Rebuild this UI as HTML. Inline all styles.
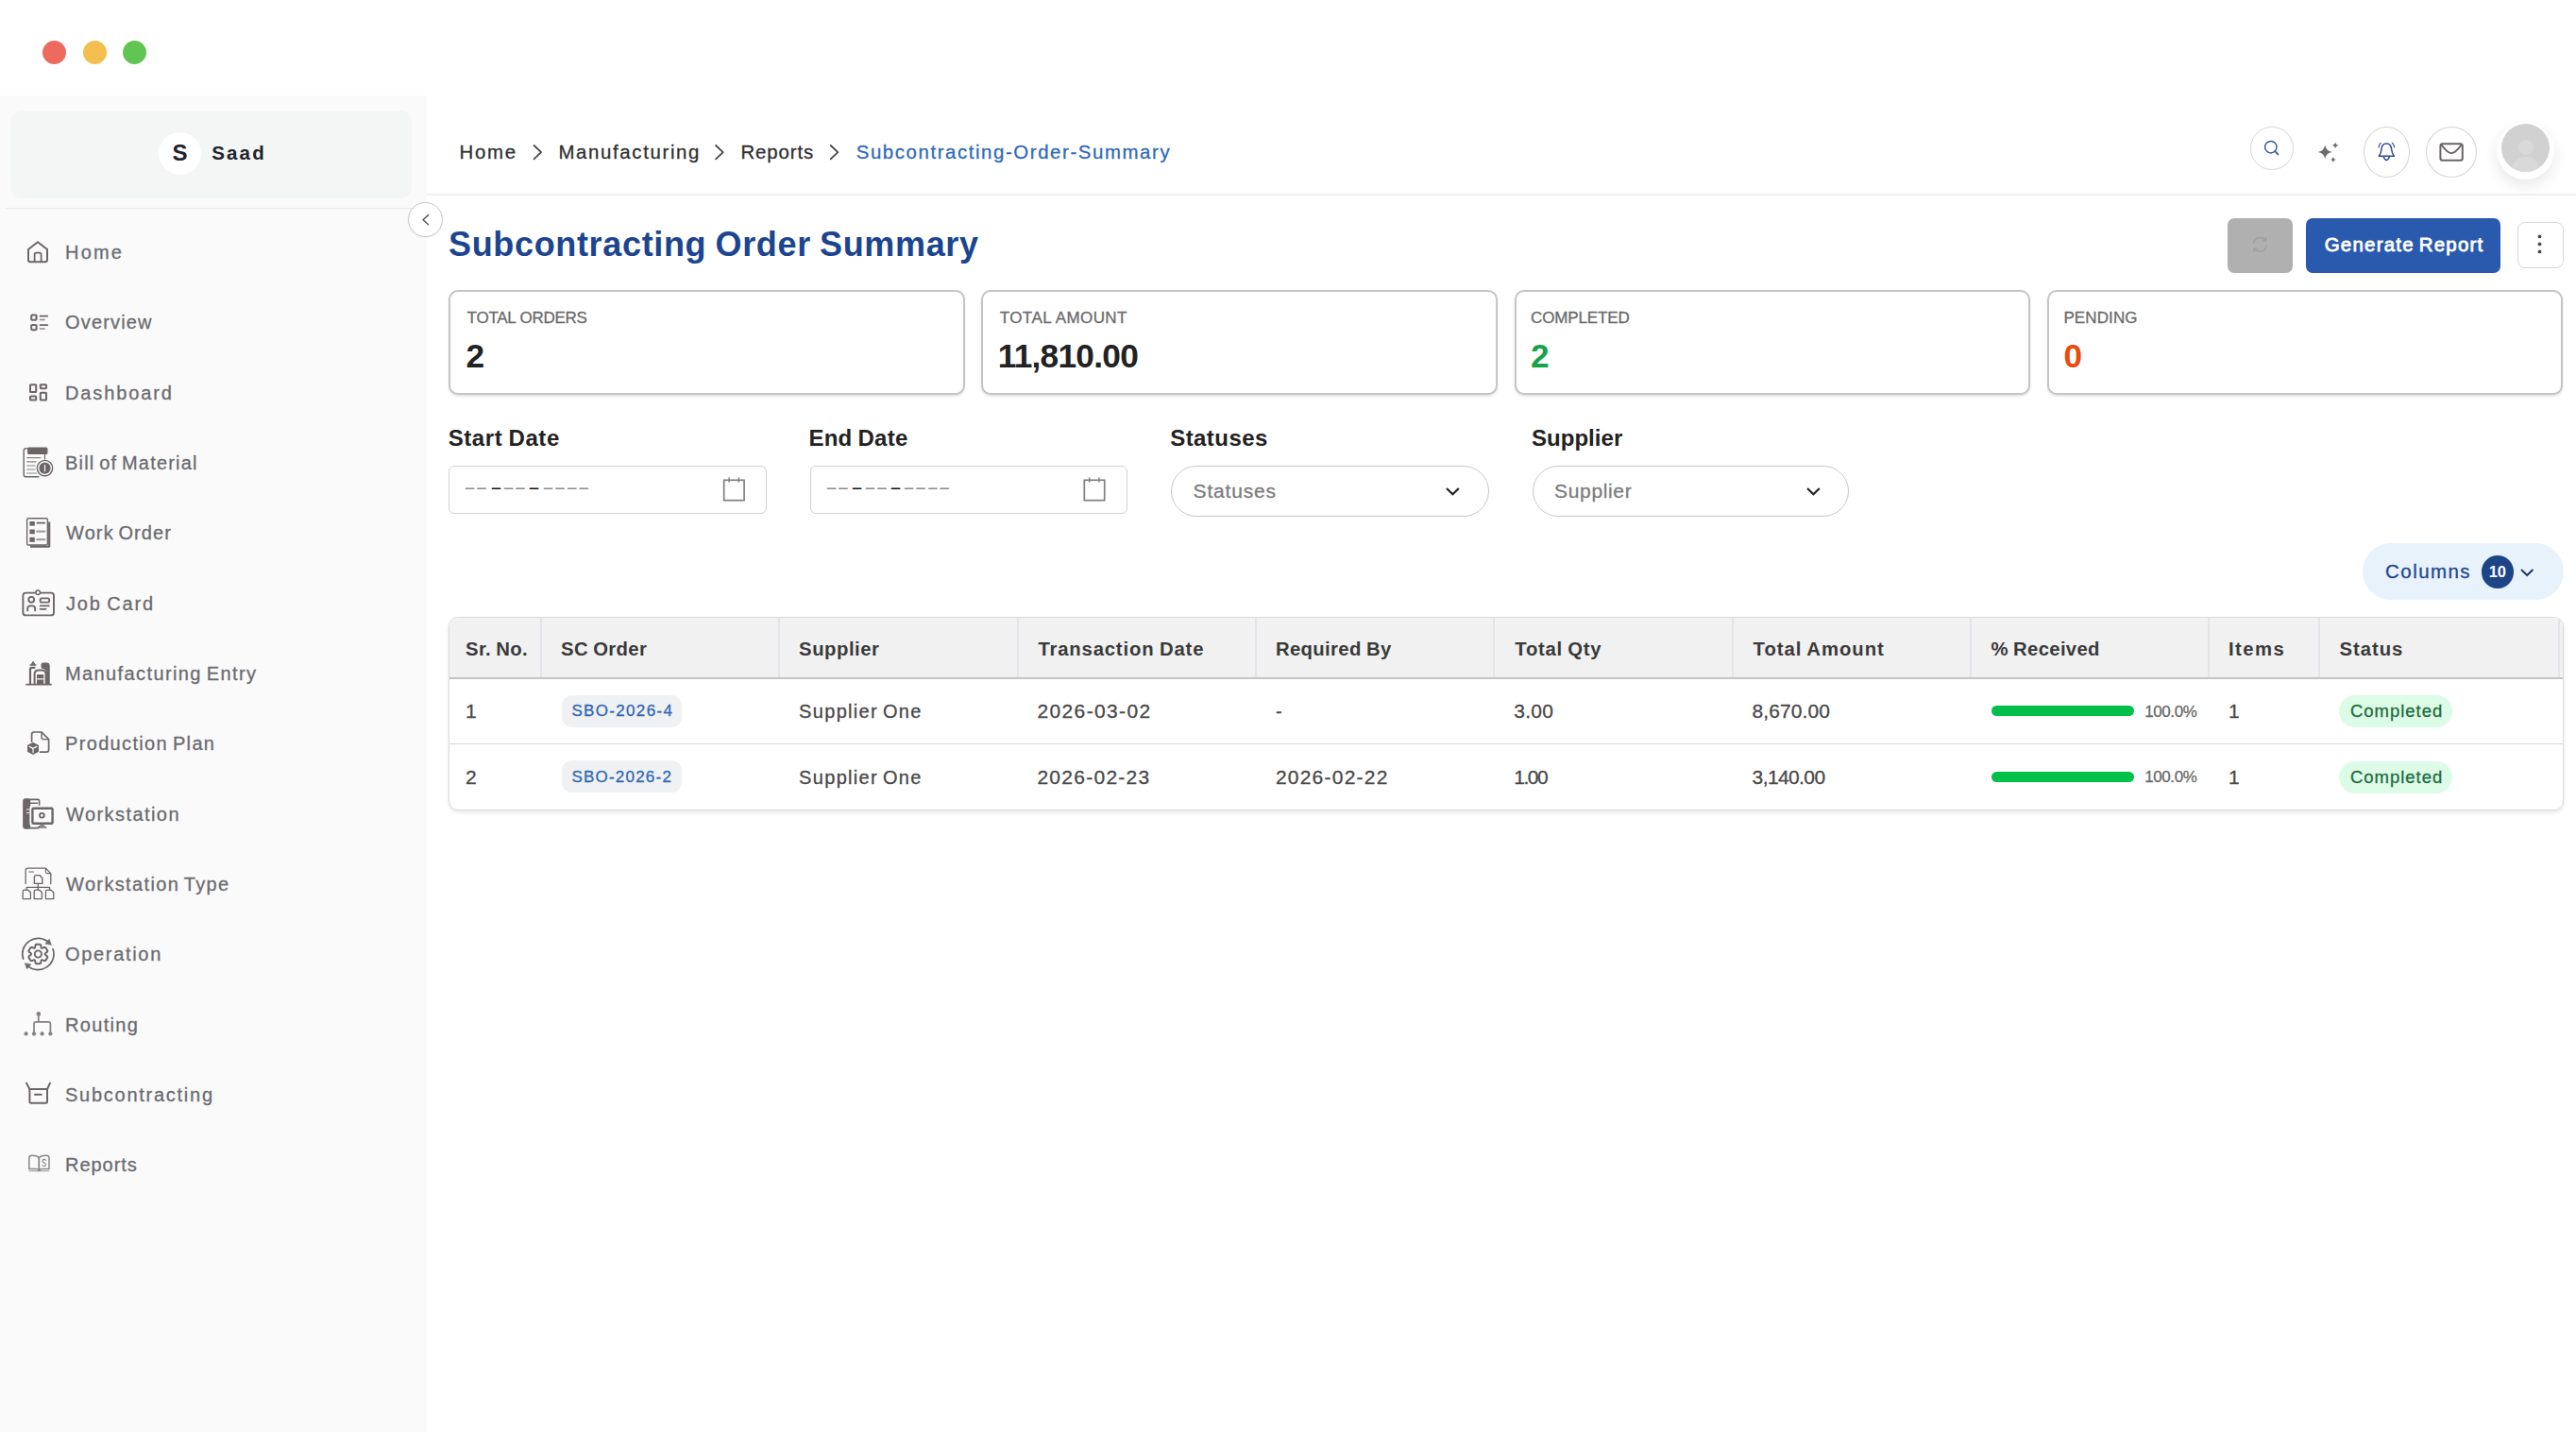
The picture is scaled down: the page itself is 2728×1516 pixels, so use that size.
<!DOCTYPE html>
<html lang="en"><head><meta charset="utf-8"><title>Subcontracting Order Summary</title>
<style>
html,body{margin:0;padding:0;background:#fff;}
body{width:2728px;height:1516px;position:relative;overflow:hidden;font-family:'Liberation Sans', sans-serif;}
.t{position:absolute;white-space:pre;line-height:1;}
.b{position:absolute;box-sizing:border-box;}
svg{position:absolute;overflow:visible;}
</style></head><body>
<!-- traffic lights -->
<div class="b" style="left:44.5px;top:42.5px;width:25px;height:25px;border-radius:50%;background:#ec6a5e"></div>
<div class="b" style="left:87.5px;top:42.5px;width:25px;height:25px;border-radius:50%;background:#f4bf4f"></div>
<div class="b" style="left:129.5px;top:42.5px;width:25px;height:25px;border-radius:50%;background:#61c554"></div>
<!-- sidebar -->
<div class="b" style="left:0;top:101px;width:452px;height:1415px;background:#fafafa"></div>
<div class="b" style="left:10.5px;top:117px;width:425.5px;height:92.5px;border-radius:12px;background:#f4f5f5"></div>
<div class="b" style="left:168.3px;top:140px;width:45px;height:45px;border-radius:50%;background:#fff"></div>
<div class="b" style="left:6px;top:220px;width:440px;height:1px;background:#ececec"></div>
<!-- header border -->
<div class="b" style="left:452px;top:205px;width:2276px;height:2px;background:#f0f0f0"></div>
<!-- collapse btn -->
<div class="b" style="left:431.8px;top:213.9px;width:37.4px;height:37.4px;border-radius:50%;background:#fff;border:1.7px solid #c6c6c6;box-shadow:0 1px 2px rgba(0,0,0,.06)"></div>
<!-- header icon circles -->
<div class="b" style="left:2383px;top:134px;width:45.6px;height:45.6px;border-radius:50%;border:1.6px solid #d3d3d6"></div>
<div class="b" style="left:2503.1px;top:134px;width:48.8px;height:53.8px;border-radius:50%;border:1.6px solid #d3d3d6"></div>
<div class="b" style="left:2569px;top:134px;width:54.2px;height:53.8px;border-radius:50%;border:1.6px solid #d3d3d6"></div>
<div class="b" style="left:2643.8px;top:129px;width:61.4px;height:61.4px;border-radius:50%;background:#fff;box-shadow:0 7px 16px rgba(0,0,0,.09)"></div>
<div class="b" style="left:2649px;top:131px;width:51px;height:51px;border-radius:50%;background:#d1d1d1;overflow:hidden">
  <div class="b" style="left:17.5px;top:17px;width:16px;height:16px;border-radius:50%;background:#d9d9d9"></div>
  <div class="b" style="left:11px;top:35px;width:29px;height:24px;border-radius:14px 14px 0 0;background:#d9d9d9"></div>
</div>
<!-- buttons -->
<div class="b" style="left:2358.5px;top:230.7px;width:69px;height:58.2px;border-radius:7px;background:#b0b0b0"></div>
<div class="b" style="left:2441.5px;top:230.7px;width:206px;height:58.2px;border-radius:7px;background:#2a5aae"></div>
<div class="b" style="left:2666.1px;top:235.1px;width:48.6px;height:48.9px;border-radius:8px;background:#fff;border:1.8px solid #d6d6d8"></div>
<!-- cards -->
<div class="b card" style="left:475px;top:307.2px;width:546.6px;height:111px"></div>
<div class="b card" style="left:1039.3px;top:307.2px;width:546.6px;height:111px"></div>
<div class="b card" style="left:1603.6px;top:307.2px;width:546.6px;height:111px"></div>
<div class="b card" style="left:2167.9px;top:307.2px;width:546.6px;height:111px"></div>
<style>.card{border:2px solid #c5c5c5;border-radius:10px;background:#fff;box-shadow:0 1.5px 2.5px rgba(0,0,0,.10)}</style>
<!-- inputs -->
<div class="b" style="left:475.3px;top:493px;width:336.5px;height:51px;border-radius:6px;border:1.7px solid #d2d2d2;background:#fff"></div>
<div class="b" style="left:858px;top:493px;width:335.6px;height:51px;border-radius:6px;border:1.7px solid #d2d2d2;background:#fff"></div>
<div class="b" style="left:1239.8px;top:492.5px;width:337.2px;height:54.6px;border-radius:27.3px;border:1.6px solid #c8c8c8;background:#fff"></div>
<div class="b" style="left:1622.6px;top:492.5px;width:335.8px;height:54.6px;border-radius:27.3px;border:1.6px solid #c8c8c8;background:#fff"></div>
<!-- columns pill -->
<div class="b" style="left:2501.7px;top:575.4px;width:213.2px;height:59.7px;border-radius:30px;background:#e8f2fb"></div>
<div class="b" style="left:2627.8px;top:588.4px;width:33.9px;height:34.2px;border-radius:50%;background:#1c4487"></div>
<!-- table -->
<div class="b" style="left:475.2px;top:652.5px;width:2239.5px;height:205.5px;border-radius:10px;background:#fff;border:1.3px solid #dcdcdc;box-shadow:0 2px 4px rgba(0,0,0,.10);overflow:hidden">
  <div class="b" style="left:0;top:0;width:100%;height:64px;background:#f1f1f1"></div>
  <div class="b" style="left:96.0px;top:0;width:2px;height:64px;background:#e4e5ea"></div>
  <div class="b" style="left:348.3px;top:0;width:2px;height:64px;background:#e4e5ea"></div>
  <div class="b" style="left:600.6px;top:0;width:2px;height:64px;background:#e4e5ea"></div>
  <div class="b" style="left:852.9px;top:0;width:2px;height:64px;background:#e4e5ea"></div>
  <div class="b" style="left:1105.2px;top:0;width:2px;height:64px;background:#e4e5ea"></div>
  <div class="b" style="left:1357.5px;top:0;width:2px;height:64px;background:#e4e5ea"></div>
  <div class="b" style="left:1609.8px;top:0;width:2px;height:64px;background:#e4e5ea"></div>
  <div class="b" style="left:1862.1px;top:0;width:2px;height:64px;background:#e4e5ea"></div>
  <div class="b" style="left:1979.2px;top:0;width:2px;height:64px;background:#e4e5ea"></div>
  <div class="b" style="left:2232.9px;top:0;width:2px;height:64px;background:#e4e5ea"></div>
  <div class="b" style="left:0;top:63.6px;width:100%;height:2px;background:#c2c3c6"></div>
  <div class="b" style="left:0;top:133.4px;width:100%;height:1.6px;background:#d9d9d9"></div>
</div>
<div class="b" style="left:595.3px;top:735.5px;width:126.5px;height:34px;border-radius:11px;background:#f0f1f3"></div>
<div class="b" style="left:2108.6px;top:746.8px;width:151.4px;height:11.6px;border-radius:6px;background:#00c04b"></div>
<div class="b" style="left:2477.2px;top:736.2px;width:120px;height:33.8px;border-radius:17px;background:#dcfce7"></div>
<div class="b" style="left:595.3px;top:805.3px;width:126.5px;height:34px;border-radius:11px;background:#f0f1f3"></div>
<div class="b" style="left:2108.6px;top:816.6px;width:151.4px;height:11.6px;border-radius:6px;background:#00c04b"></div>
<div class="b" style="left:2477.2px;top:806.0px;width:120px;height:33.8px;border-radius:17px;background:#dcfce7"></div>

<svg width="2728" height="1516" viewBox="0 0 2728 1516" style="left:0;top:0" fill="none" stroke-linecap="round" stroke-linejoin="round">
<!-- ===== sidebar icons ===== -->
<g stroke="#6c6667" stroke-width="2">
  <!-- home -->
  <path d="M30 264 L40 256.2 L50 264 V275 Q50 277.2 47.8 277.2 H32.2 Q30 277.2 30 275 Z"/>
  <path d="M36.6 277 V269.5 Q36.6 267.6 38.5 267.6 H41.7 Q43.6 267.6 43.6 269.5 V277" stroke-width="1.8"/>
  <!-- overview -->
  <rect x="33.2" y="333.6" width="5.4" height="5.2" rx="1"/>
  <rect x="33.2" y="344" width="5.4" height="5.2" rx="1"/>
  <path d="M42.4 334.7 H50.2 M42.4 344.2 H50.2" stroke-width="1.7"/>
  <path d="M42.4 338.4 H47.2 M42.4 347.9 H47.2" stroke-width="1.5" opacity=".75"/>
  <!-- dashboard -->
  <rect x="32" y="407.2" width="6.2" height="7.8" rx=".6"/>
  <rect x="32" y="419.6" width="6.2" height="4" rx=".6"/>
  <rect x="42.8" y="407.2" width="6.2" height="4" rx=".6"/>
  <rect x="42.8" y="415.8" width="6.2" height="7.8" rx=".6"/>
</g>
<!-- bill of material -->
<g stroke="#6c6667" stroke-width="1.4">
  <path d="M29.5 474.6 H27.5 Q25.2 474.6 25.2 477 V502.4 Q25.2 504.8 27.5 504.8 H41"/>
  <rect x="29.8" y="474.2" width="20" height="6.2" rx="1" fill="#6c6667"/>
  <path d="M28.6 484.6 H43 M28.6 488.8 H38 M28.6 493 H37 M28.6 497 H37 M28.6 501 H38.5" stroke-width="1.2" opacity=".8"/>
  <path d="M47.5 481 V486" stroke-width="1.2"/>
  <circle cx="47.5" cy="495.6" r="8.2" fill="#fafafa"/>
  <circle cx="47.5" cy="495.6" r="5.4" fill="#6c6667"/>
  <path d="M47.5 492.4 V498.8" stroke="#fafafa" stroke-width="1.2"/>
</g>
<!-- work order -->
<g stroke="#6c6667" stroke-width="1.4">
  <path d="M52.2 552.5 V578.6 H32" stroke-width="2.2" stroke-linecap="butt"/>
  <rect x="28.6" y="548.8" width="21.8" height="28.2" rx="1.6" fill="#fafafa"/>
  <rect x="31.4" y="552" width="5.4" height="4.6" fill="#6c6667" stroke="none"/>
  <rect x="31.4" y="560.5" width="5.4" height="4.8" fill="#6c6667" stroke="none"/>
  <rect x="31.4" y="568.8" width="5.4" height="5" fill="#6c6667" stroke="none"/>
  <path d="M39.2 553.6 H47.4" stroke-width="1.6"/>
  <path d="M39.2 562.6 H47.4 M39.2 571.2 H47.4" stroke-width="2.2" opacity=".6"/>
</g>
<!-- job card -->
<g stroke="#6c6667" stroke-width="1.9">
  <rect x="24.4" y="627.6" width="32.6" height="23.8" rx="3"/>
  <circle cx="40.2" cy="627.2" r="2.3" fill="#fafafa" stroke-width="1.5"/>
  <circle cx="33.2" cy="634.8" r="2.9"/>
  <path d="M29.2 646.4 V644.4 Q29.2 641.4 32.2 641.4 H34.2 Q37.2 641.4 37.2 644.4 V646.4"/>
  <rect x="42.6" y="633.4" width="9.6" height="4.2" rx="1.6"/>
  <path d="M42.6 641.4 H51.8 M42.6 644.8 H48.6" stroke-width="1.7"/>
</g>
<!-- manufacturing entry -->
<g stroke="#6c6667" stroke-width="1.6">
  <path d="M28 724.6 H54" stroke-width="1.8"/>
  <path d="M34.9 700.6 L33.2 703.4 H36.6 Z" fill="#6c6667" stroke-width="1"/>
  <path d="M32 704 H38" stroke-width="1.3"/>
  <path d="M32 724 V708.6 Q32 706.8 33.8 706.8 H36.5" stroke-width="2.2"/>
  <path d="M44 705 V703.4 Q44 702 45.6 702 H50 Q52.2 702 52.2 704.2 V724 H49.4 V712 Q49.4 707.5 44.4 707.2 Z" fill="#6c6667" stroke-width="1"/>
  <path d="M36.6 724 V714 Q36.6 709.6 41 709.6 H44.2 Q48.6 709.6 48.6 714 V724" stroke-width="2"/>
  <rect x="39" y="714" width="7.2" height="10" fill="#6c6667" stroke="none"/>
  <path d="M39.6 718.8 H45.6" stroke="#fafafa" stroke-width="1.3"/>
</g>
<!-- production plan -->
<g stroke="#6c6667" stroke-width="1.7">
  <path d="M33.6 785 V777.4 Q33.6 775 36 775 H44 L51.6 782.6 V793.8 Q51.6 796.2 49.2 796.2 H42.6"/>
  <path d="M44 775.4 V780.4 Q44 782.6 46.2 782.6 H51.2" stroke-width="1.4"/>
  <path d="M35 786.6 L40.4 789.4 V795.4 L35 798.2 L29.6 795.4 V789.4 Z" fill="#6c6667" stroke-width="1.2"/>
  <path d="M31.2 790.4 L35 792.4 L38.8 790.4 M35 792.4 V796.6" stroke="#fafafa" stroke-width="1.2"/>
</g>
<!-- workstation -->
<g stroke="#6c6667" stroke-width="1.6">
  <rect x="25.2" y="846.4" width="16.4" height="30.2" rx="1.6"/>
  <rect x="25.2" y="846.4" width="6.2" height="30.2" rx="1.2" fill="#6c6667"/>
  <path d="M28 850.2 H39.5" stroke-width="1.5"/>
  <path d="M31.4 851 V876" stroke-width="1"/>
  <path d="M28.5 857 H31 M28.5 860.5 H31" stroke="#fafafa" stroke-width="1"/>
  <rect x="32.6" y="854" width="24" height="19.4" rx="1.2" fill="#fafafa" stroke="#fafafa" stroke-width="2.4"/>
  <rect x="34.4" y="855.8" width="21.2" height="16" rx="1" stroke-width="2.4" fill="#fafafa"/>
  <circle cx="44.4" cy="863.2" r="2.4" stroke-width="1.8"/>
  <path d="M44.4 872.6 L40 876.2 H49 Z" fill="#6c6667" stroke-width="1" opacity=".8"/>
</g>
<!-- workstation type -->
<g stroke="#6c6667" stroke-width="1.3">
  <path d="M27.2 935.6 V921.4 Q27.2 919.2 29.4 919.2 H48.4 L53.8 924.6 V935.6"/>
  <path d="M48.4 919.6 V923 Q48.4 924.6 50 924.6 H53.4" stroke-width="1.1"/>
  <path d="M30.8 923 H35.6" stroke-width="1.1"/>
  <path d="M36.4 935.4 V928.4 Q36.4 926.6 38.2 926.6 H42 L44.8 929.4 V935.4 Z" stroke-width="1.4"/>
  <path d="M40.3 935.6 V939.4 M28.2 942 V939.4 H52.6 V942 M40.3 939.4 V942"/>
  <path d="M24.2 951.6 V944 Q24.2 942.2 26 942.2 H29.8 L32.4 944.8 V951.6 Z"/>
  <path d="M36.2 951.6 V944 Q36.2 942.2 38 942.2 H41.8 L44.4 944.8 V951.6 Z"/>
  <path d="M48.4 951.6 V944 Q48.4 942.2 50.2 942.2 H54 L56.8 944.8 V951.6 Z"/>
</g>
<!-- operation -->
<g stroke="#6c6667" stroke-width="1.7">
  <path d="M24.57 1015.13 A16.6 16.6 0 0 1 51.25 997.47"/>
  <path d="M56.15 1004.87 A16.6 16.6 0 0 1 29.47 1022.53"/>
  <path d="M54.26 1000.09 L52.21 994.13 L48.07 998.88 Z" fill="#6c6667" stroke-width=".6"/>
  <path d="M26.46 1019.91 L28.51 1025.87 L32.65 1021.12 Z" fill="#6c6667" stroke-width=".6"/>
  <path d="M38.16 999.63 L42.56 999.63 L43.42 1001.11 Q42.96 1005.50 46.53 1002.91 L48.24 1002.91 L50.44 1006.72 L49.59 1008.21 Q45.56 1010.00 49.59 1011.79 L50.44 1013.28 L48.24 1017.09 L46.53 1017.09 Q42.96 1014.50 43.42 1018.89 L42.56 1020.37 L38.16 1020.37 L37.30 1018.89 Q37.76 1014.50 34.19 1017.09 L32.48 1017.09 L30.28 1013.28 L31.13 1011.79 Q35.16 1010.00 31.13 1008.21 L30.28 1006.72 L32.48 1002.91 L34.19 1002.91 Q37.76 1005.50 37.30 1001.11 L38.16 999.63 Z" stroke-width="2"/>
  <circle cx="40.36" cy="1010.0" r="3.6" stroke-width="1.9"/>
</g>
<!-- routing -->
<g stroke="#858081" stroke-width="1.7">
  <circle cx="40.8" cy="1073.4" r="1.7" fill="#858081" stroke-width="1.2"/>
  <path d="M40.8 1075 V1081.8 M36 1092 V1084 Q36 1081.8 38.2 1081.8 H51.2 Q53.4 1081.8 53.4 1084 V1092"/>
  <circle cx="27.6" cy="1094.4" r="2.1" fill="#858081" stroke="none"/>
  <circle cx="36" cy="1094.4" r="2.1" fill="#858081" stroke="none"/>
  <circle cx="44.6" cy="1094.4" r="2.1" fill="#858081" stroke="none"/>
  <circle cx="53.4" cy="1094.4" r="2.1" fill="#858081" stroke="none"/>
</g>
<!-- subcontracting -->
<g stroke="#6c6667" stroke-width="2">
  <path d="M28 1146.6 L31.4 1153 H50 L53 1146.6"/>
  <path d="M31.4 1153 V1166.4 Q31.4 1167.8 32.8 1167.8 H48.6 Q50 1167.8 50 1166.4 V1153"/>
  <path d="M37 1158.7 H43.8"/>
</g>
<!-- reports -->
<g stroke="#8a8687" stroke-width="1.5">
  <path d="M41.3 1225.4 Q38.6 1223 33.6 1223.2 Q30.8 1223.4 30.8 1226 V1237.6 H38 Q40.6 1237.6 41.3 1239.4 Q42 1237.6 44.6 1237.600 H52 V1226 Q52 1223.400 49.200 1223.200 Q44 1223 41.3 1225.400 Z"/>
  <path d="M41.3 1225.4 V1239.2" stroke-width="1.8"/>
  <path d="M31 1239.600 H51.800" stroke-width="1.2" opacity=".7"/>
  <path d="M48.600 1228.200 Q46.400 1226.600 45.200 1228.200 Q44.400 1229.800 46.800 1231 Q49.200 1232.200 48.200 1233.800 Q47 1235.200 44.800 1233.800" stroke-width="1.1"/>
</g>

<!-- ===== collapse chevron ===== -->
<path d="M453.6 227.6 L448 232.700 L453.600 237.800" stroke="#5c5859" stroke-width="1.5"/>

<!-- ===== breadcrumb chevrons ===== -->
<g stroke="#4a4647" stroke-width="1.8">
  <path d="M565.5 154 L573.1 161.2 L565.5 168.400"/>
  <path d="M758.100 154 L765.700 161.2 L758.100 168.400"/>
  <path d="M879.700 154 L887.300 161.2 L879.700 168.400"/>
</g>

<!-- ===== header icons ===== -->
<g stroke="#3b5998" stroke-width="1.5">
  <circle cx="2404.8" cy="155.7" r="6.2"/>
  <path d="M2409.200 160.200 L2412.400 163.400" stroke-width="1.8"/>
</g>
<g fill="#6e6e6e" stroke="none">
  <path d="M2462.200 153.600 Q2463.200 160 2469.800 160.900 Q2463.200 161.800 2462.200 168.400 Q2461.200 161.800 2454.600 160.900 Q2461.200 160 2462.200 153.600 Z"/>
  <path d="M2473.100 150.200 Q2473.600 153.400 2476.800 153.800 Q2473.600 154.300 2473.100 157.400 Q2472.600 154.300 2469.400 153.800 Q2472.600 153.400 2473.100 150.200 Z"/>
  <path d="M2470.900 165.800 Q2471.300 168.700 2474.200 169.100 Q2471.300 169.500 2470.900 172.400 Q2470.500 169.500 2467.600 169.100 Q2470.500 168.700 2470.900 165.800 Z"/>
</g>
<g stroke="#2b4a8b" stroke-width="1.5">
  <path d="M2519.2 165.200 Q2521.600 162.600 2522 157.800 Q2522.400 151.900 2527.300 151.900 Q2532.200 151.900 2532.600 157.800 Q2533 162.600 2535.400 165.200 Z"/>
  <path d="M2524.200 166 Q2527.300 173 2530.400 166"/>
  <path d="M2521.200 151.400 Q2519.400 153.200 2519 155.800 M2533.400 151.400 Q2535.200 153.200 2535.600 155.800" stroke-width="1.2"/>
</g>
<g stroke="#6a6566" stroke-width="2">
  <rect x="2584.400" y="152.200" width="23.400" height="17.600" rx="2.400"/>
  <path d="M2585.600 153.400 Q2592 162.200 2596.100 162.200 Q2600.200 162.200 2606.600 153.400" stroke-width="1.800"/>
</g>
<!-- refresh in grey button -->
<g stroke="#9e9e9e" stroke-width="1.4">
  <path d="M2386.600 257.200 A7 7 0 0 1 2399 254.200"/>
  <path d="M2400 260.600 A7 7 0 0 1 2387.600 263.600"/>
  <path d="M2399.600 251.400 V254.800 H2396.200 M2387 266.400 V263 H2390.400" stroke-width="1.2"/>
</g>
<!-- kebab -->
<g fill="#4a4a4a" stroke="none">
  <circle cx="2689.500" cy="250.400" r="1.900"/><circle cx="2689.500" cy="258.400" r="1.900"/><circle cx="2689.500" cy="266.400" r="1.900"/>
</g>

<!-- ===== calendar icons ===== -->
<g stroke="#808080" stroke-width="1.7" stroke-linejoin="miter" stroke-linecap="butt">
  <rect x="766.700" y="508.300" width="21.400" height="21.400"/>
  <path d="M772.100 505.600 V510.600 M782.300 505.600 V510.600" stroke-width="1.5"/>
  <rect x="1148.300" y="508.300" width="21.400" height="21.400"/>
  <path d="M1153.700 505.600 V510.600 M1163.900 505.600 V510.600" stroke-width="1.5"/>
</g>
<!-- select chevrons -->
<g stroke="#222" stroke-width="2.200" stroke-linecap="butt" stroke-linejoin="miter">
  <path d="M1532 517 L1538.400 523.200 L1544.800 517"/>
  <path d="M1914 517 L1920.400 523.200 L1926.800 517"/>
</g>
<path d="M2670 603 L2676.200 609 L2682.400 603" stroke="#1d3b70" stroke-width="2" stroke-linecap="butt" stroke-linejoin="miter"/>
</svg>

<nav>
<span class="t" style="left:69.0px;top:256.9px;font-size:20px;font-weight:400;color:#6b6b70;letter-spacing:2.20px;-webkit-text-stroke:0.3px #6b6b70;">Home</span>
<span class="t" style="left:69.0px;top:331.2px;font-size:20px;font-weight:400;color:#6b6b70;letter-spacing:1.16px;-webkit-text-stroke:0.3px #6b6b70;">Overview</span>
<span class="t" style="left:69.0px;top:405.6px;font-size:20px;font-weight:400;color:#6b6b70;letter-spacing:1.88px;-webkit-text-stroke:0.3px #6b6b70;">Dashboard</span>
<span class="t" style="left:69.0px;top:479.9px;font-size:20px;font-weight:400;color:#6b6b70;letter-spacing:1.19px;-webkit-text-stroke:0.3px #6b6b70;word-spacing:-0.1em;">Bill of Material</span>
<span class="t" style="left:70.0px;top:554.3px;font-size:20px;font-weight:400;color:#6b6b70;letter-spacing:1.11px;-webkit-text-stroke:0.3px #6b6b70;word-spacing:-0.1em;">Work Order</span>
<span class="t" style="left:70.0px;top:628.6px;font-size:20px;font-weight:400;color:#6b6b70;letter-spacing:1.87px;-webkit-text-stroke:0.3px #6b6b70;word-spacing:-0.1em;">Job Card</span>
<span class="t" style="left:69.0px;top:703.0px;font-size:20px;font-weight:400;color:#6b6b70;letter-spacing:1.39px;-webkit-text-stroke:0.3px #6b6b70;word-spacing:-0.1em;">Manufacturing Entry</span>
<span class="t" style="left:69.0px;top:777.3px;font-size:20px;font-weight:400;color:#6b6b70;letter-spacing:1.34px;-webkit-text-stroke:0.3px #6b6b70;word-spacing:-0.1em;">Production Plan</span>
<span class="t" style="left:70.0px;top:851.7px;font-size:20px;font-weight:400;color:#6b6b70;letter-spacing:1.43px;-webkit-text-stroke:0.3px #6b6b70;">Workstation</span>
<span class="t" style="left:70.0px;top:926.0px;font-size:20px;font-weight:400;color:#6b6b70;letter-spacing:1.36px;-webkit-text-stroke:0.3px #6b6b70;word-spacing:-0.1em;">Workstation Type</span>
<span class="t" style="left:69.0px;top:1000.4px;font-size:20px;font-weight:400;color:#6b6b70;letter-spacing:1.68px;-webkit-text-stroke:0.3px #6b6b70;">Operation</span>
<span class="t" style="left:69.0px;top:1074.7px;font-size:20px;font-weight:400;color:#6b6b70;letter-spacing:1.33px;-webkit-text-stroke:0.3px #6b6b70;">Routing</span>
<span class="t" style="left:69.0px;top:1149.1px;font-size:20px;font-weight:400;color:#6b6b70;letter-spacing:1.74px;-webkit-text-stroke:0.3px #6b6b70;">Subcontracting</span>
<span class="t" style="left:69.0px;top:1223.4px;font-size:20px;font-weight:400;color:#6b6b70;letter-spacing:0.97px;-webkit-text-stroke:0.3px #6b6b70;">Reports</span>
<span class="t" style="left:182.4px;top:150.3px;font-size:24px;font-weight:700;color:#20222c;letter-spacing:0.00px;">S</span>
<span class="t" style="left:224.2px;top:152.2px;font-size:20.5px;font-weight:700;color:#20222c;letter-spacing:2.17px;">Saad</span>
</nav>
<header>
<span class="t" style="left:486.4px;top:151.0px;font-size:20.4px;font-weight:400;color:#2f2f2f;letter-spacing:1.80px;-webkit-text-stroke:0.3px #2f2f2f;">Home</span>
<span class="t" style="left:591.4px;top:151.0px;font-size:20.4px;font-weight:400;color:#2f2f2f;letter-spacing:1.65px;-webkit-text-stroke:0.3px #2f2f2f;">Manufacturing</span>
<span class="t" style="left:784.4px;top:151.0px;font-size:20.4px;font-weight:400;color:#2f2f2f;letter-spacing:0.90px;-webkit-text-stroke:0.3px #2f2f2f;">Reports</span>
<span class="t" style="left:906.7px;top:151.0px;font-size:20.4px;font-weight:400;color:#2f6ab8;letter-spacing:1.59px;-webkit-text-stroke:0.3px #2f6ab8;">Subcontracting-Order-Summary</span>
</header>
<main>
<span class="t" style="left:475.0px;top:240.7px;font-size:36px;font-weight:700;color:#1b4590;letter-spacing:0.66px;word-spacing:-0.04em;">Subcontracting Order Summary</span>
<span class="t" style="left:2461.7px;top:249.3px;font-size:20.5px;font-weight:400;color:#fff;letter-spacing:1.21px;-webkit-text-stroke:0.8px #fff;word-spacing:-0.1em;">Generate Report</span>
<span class="t" style="left:494.6px;top:328.4px;font-size:17px;font-weight:400;color:#6a6a6a;letter-spacing:-0.25px;-webkit-text-stroke:0.3px #6a6a6a;word-spacing:0;">TOTAL ORDERS</span>
<span class="t" style="left:493.6px;top:358.8px;font-size:35.3px;font-weight:700;color:#222;letter-spacing:0.00px;">2</span>
<span class="t" style="left:1058.7px;top:328.4px;font-size:17px;font-weight:400;color:#6a6a6a;letter-spacing:0.43px;-webkit-text-stroke:0.3px #6a6a6a;word-spacing:0;">TOTAL AMOUNT</span>
<span class="t" style="left:1056.7px;top:358.8px;font-size:35.3px;font-weight:700;color:#222;letter-spacing:-0.74px;">11,810.00</span>
<span class="t" style="left:1621.0px;top:328.4px;font-size:17px;font-weight:400;color:#6a6a6a;letter-spacing:-0.14px;-webkit-text-stroke:0.3px #6a6a6a;word-spacing:0;">COMPLETED</span>
<span class="t" style="left:1621.0px;top:358.8px;font-size:35.3px;font-weight:700;color:#16a34a;letter-spacing:0.00px;">2</span>
<span class="t" style="left:2185.4px;top:328.4px;font-size:17px;font-weight:400;color:#6a6a6a;letter-spacing:0.12px;-webkit-text-stroke:0.3px #6a6a6a;word-spacing:0;">PENDING</span>
<span class="t" style="left:2185.4px;top:358.8px;font-size:35.3px;font-weight:700;color:#ea4b0c;letter-spacing:0.00px;">0</span>
<span class="t" style="left:474.7px;top:451.7px;font-size:24px;font-weight:700;color:#222;letter-spacing:0.57px;word-spacing:-0.04em;">Start Date</span>
<span class="t" style="left:856.4px;top:451.7px;font-size:24px;font-weight:700;color:#222;letter-spacing:0.26px;word-spacing:-0.04em;">End Date</span>
<span class="t" style="left:1239.2px;top:451.7px;font-size:24px;font-weight:700;color:#222;letter-spacing:0.44px;">Statuses</span>
<span class="t" style="left:1622.0px;top:451.7px;font-size:24px;font-weight:700;color:#222;letter-spacing:0.03px;">Supplier</span>
<span class="t" style="left:1263.6px;top:509.2px;font-size:21px;font-weight:400;color:#7b7b7b;letter-spacing:0.83px;-webkit-text-stroke:0.3px #7b7b7b;">Statuses</span>
<span class="t" style="left:1646.1px;top:509.2px;font-size:21px;font-weight:400;color:#7b7b7b;letter-spacing:0.64px;-webkit-text-stroke:0.3px #7b7b7b;">Supplier</span>
<span class="t" style="left:2526.1px;top:595.1px;font-size:20.5px;font-weight:400;color:#1e4690;letter-spacing:1.43px;-webkit-text-stroke:0.3px #1e4690;">Columns</span>
<span class="t" style="left:2635.8px;top:597.0px;font-size:16.5px;font-weight:700;color:#fff;letter-spacing:-0.10px;">10</span>
<span class="t" style="left:493.0px;top:676.6px;font-size:20.3px;font-weight:700;color:#3a3a3a;letter-spacing:0.37px;word-spacing:-0.04em;">Sr. No.</span>
<span class="t" style="left:594.1px;top:676.6px;font-size:20.3px;font-weight:700;color:#3a3a3a;letter-spacing:0.37px;word-spacing:-0.04em;">SC Order</span>
<span class="t" style="left:846.1px;top:676.6px;font-size:20.3px;font-weight:700;color:#3a3a3a;letter-spacing:0.54px;">Supplier</span>
<span class="t" style="left:1099.4px;top:676.6px;font-size:20.3px;font-weight:700;color:#3a3a3a;letter-spacing:0.83px;word-spacing:-0.04em;">Transaction Date</span>
<span class="t" style="left:1350.9px;top:676.6px;font-size:20.3px;font-weight:700;color:#3a3a3a;letter-spacing:0.37px;word-spacing:-0.04em;">Required By</span>
<span class="t" style="left:1604.3px;top:676.6px;font-size:20.3px;font-weight:700;color:#3a3a3a;letter-spacing:0.70px;word-spacing:-0.04em;">Total Qty</span>
<span class="t" style="left:1856.6px;top:676.6px;font-size:20.3px;font-weight:700;color:#3a3a3a;letter-spacing:0.96px;word-spacing:-0.04em;">Total Amount</span>
<span class="t" style="left:2108.5px;top:676.6px;font-size:20.3px;font-weight:700;color:#3a3a3a;letter-spacing:0.34px;word-spacing:-0.04em;">% Received</span>
<span class="t" style="left:2359.9px;top:676.6px;font-size:20.3px;font-weight:700;color:#3a3a3a;letter-spacing:1.48px;">Items</span>
<span class="t" style="left:2477.4px;top:676.6px;font-size:20.3px;font-weight:700;color:#3a3a3a;letter-spacing:1.00px;">Status</span>
<span class="t" style="left:493.0px;top:742.2px;font-size:21px;font-weight:400;color:#484848;letter-spacing:0.00px;-webkit-text-stroke:0.3px #484848;">1</span>
<span class="t" style="left:493.0px;top:812.0px;font-size:21px;font-weight:400;color:#484848;letter-spacing:0.00px;-webkit-text-stroke:0.3px #484848;">2</span>
<span class="t" style="left:605.4px;top:744.3px;font-size:17px;font-weight:400;color:#2f66b5;letter-spacing:1.33px;-webkit-text-stroke:0.3px #2f66b5;">SBO-2026-4</span>
<span class="t" style="left:605.4px;top:814.1px;font-size:17px;font-weight:400;color:#2f66b5;letter-spacing:1.22px;-webkit-text-stroke:0.3px #2f66b5;">SBO-2026-2</span>
<span class="t" style="left:846.1px;top:743.1px;font-size:20px;font-weight:400;color:#484848;letter-spacing:1.32px;-webkit-text-stroke:0.3px #484848;word-spacing:-0.1em;">Supplier One</span>
<span class="t" style="left:846.1px;top:812.9px;font-size:20px;font-weight:400;color:#484848;letter-spacing:1.32px;-webkit-text-stroke:0.3px #484848;word-spacing:-0.1em;">Supplier One</span>
<span class="t" style="left:1098.4px;top:742.2px;font-size:21px;font-weight:400;color:#484848;letter-spacing:1.38px;-webkit-text-stroke:0.3px #484848;">2026-03-02</span>
<span class="t" style="left:1098.4px;top:812.0px;font-size:21px;font-weight:400;color:#484848;letter-spacing:1.27px;-webkit-text-stroke:0.3px #484848;">2026-02-23</span>
<span class="t" style="left:1350.9px;top:743.1px;font-size:20px;font-weight:400;color:#484848;letter-spacing:0.00px;-webkit-text-stroke:0.3px #484848;">-</span>
<span class="t" style="left:1350.9px;top:812.0px;font-size:21px;font-weight:400;color:#484848;letter-spacing:1.23px;-webkit-text-stroke:0.3px #484848;">2026-02-22</span>
<span class="t" style="left:1603.3px;top:742.2px;font-size:21px;font-weight:400;color:#484848;letter-spacing:0.27px;-webkit-text-stroke:0.3px #484848;">3.00</span>
<span class="t" style="left:1603.3px;top:812.0px;font-size:21px;font-weight:400;color:#484848;letter-spacing:-1.50px;-webkit-text-stroke:0.3px #484848;">1.00</span>
<span class="t" style="left:1855.6px;top:742.2px;font-size:21px;font-weight:400;color:#484848;letter-spacing:0.09px;-webkit-text-stroke:0.3px #484848;">8,670.00</span>
<span class="t" style="left:1855.6px;top:812.0px;font-size:21px;font-weight:400;color:#484848;letter-spacing:-0.61px;-webkit-text-stroke:0.3px #484848;">3,140.00</span>
<span class="t" style="left:2271.2px;top:744.6px;font-size:17px;font-weight:400;color:#6a6a6a;letter-spacing:-0.40px;-webkit-text-stroke:0.3px #6a6a6a;">100.0%</span>
<span class="t" style="left:2271.2px;top:814.4px;font-size:17px;font-weight:400;color:#6a6a6a;letter-spacing:-0.40px;-webkit-text-stroke:0.3px #6a6a6a;">100.0%</span>
<span class="t" style="left:2359.9px;top:742.2px;font-size:21px;font-weight:400;color:#484848;letter-spacing:0.00px;-webkit-text-stroke:0.3px #484848;">1</span>
<span class="t" style="left:2359.9px;top:812.0px;font-size:21px;font-weight:400;color:#484848;letter-spacing:0.00px;-webkit-text-stroke:0.3px #484848;">1</span>
<span class="t" style="left:2488.9px;top:743.7px;font-size:18.5px;font-weight:400;color:#1f6b3f;letter-spacing:0.99px;-webkit-text-stroke:0.3px #1f6b3f;">Completed</span>
<span class="t" style="left:2488.9px;top:813.5px;font-size:18.5px;font-weight:400;color:#1f6b3f;letter-spacing:0.99px;-webkit-text-stroke:0.3px #1f6b3f;">Completed</span>
<span class="t" style="left:491.4px;top:506.2px;font-size:20px;font-weight:400;color:#8c8c8c;letter-spacing:-0.2px;transform:scaleX(1.95);transform-origin:0 0">--</span>
<span class="t" style="left:518.5px;top:506.2px;font-size:20px;font-weight:400;color:#111;letter-spacing:-0.2px;transform:scaleX(1.95);transform-origin:0 0">-</span>
<span class="t" style="left:532.3px;top:506.2px;font-size:20px;font-weight:400;color:#8c8c8c;letter-spacing:-0.2px;transform:scaleX(1.95);transform-origin:0 0">--</span>
<span class="t" style="left:559.4px;top:506.2px;font-size:20px;font-weight:400;color:#111;letter-spacing:-0.2px;transform:scaleX(1.95);transform-origin:0 0">-</span>
<span class="t" style="left:573.9px;top:506.2px;font-size:20px;font-weight:400;color:#8c8c8c;letter-spacing:-0.2px;transform:scaleX(1.95);transform-origin:0 0">----</span>
<span class="t" style="left:873.7px;top:506.2px;font-size:20px;font-weight:400;color:#8c8c8c;letter-spacing:-0.2px;transform:scaleX(1.95);transform-origin:0 0">--</span>
<span class="t" style="left:900.8px;top:506.2px;font-size:20px;font-weight:400;color:#111;letter-spacing:-0.2px;transform:scaleX(1.95);transform-origin:0 0">-</span>
<span class="t" style="left:914.6px;top:506.2px;font-size:20px;font-weight:400;color:#8c8c8c;letter-spacing:-0.2px;transform:scaleX(1.95);transform-origin:0 0">--</span>
<span class="t" style="left:941.7px;top:506.2px;font-size:20px;font-weight:400;color:#111;letter-spacing:-0.2px;transform:scaleX(1.95);transform-origin:0 0">-</span>
<span class="t" style="left:956.2px;top:506.2px;font-size:20px;font-weight:400;color:#8c8c8c;letter-spacing:-0.2px;transform:scaleX(1.95);transform-origin:0 0">----</span>
</main>
</body></html>
